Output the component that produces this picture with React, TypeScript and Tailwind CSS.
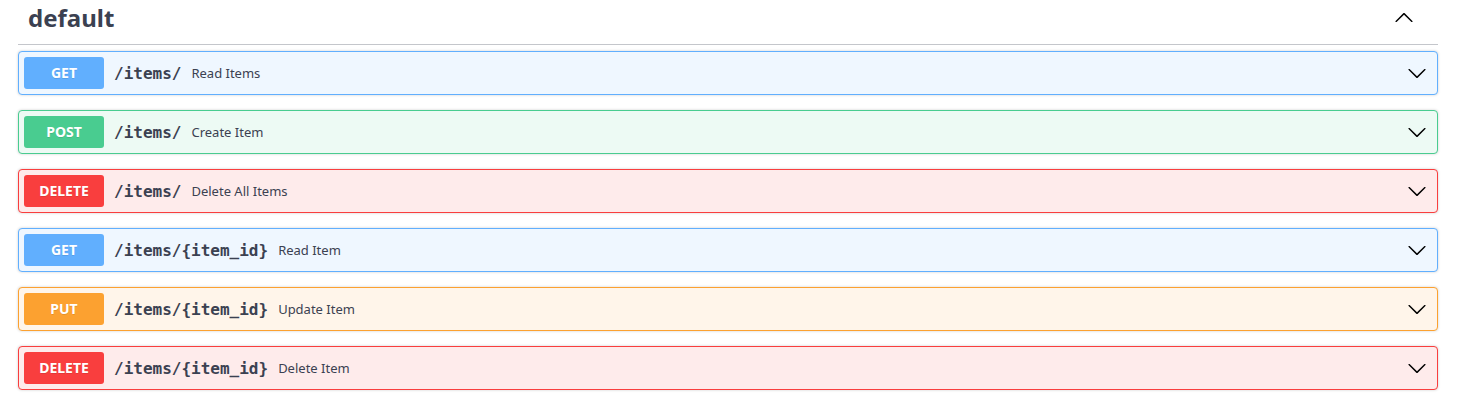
import React from "react";

const Chevron = ({ up = false }: { up?: boolean }) => (
  <svg width="20" height="20" viewBox="0 0 20 20" className={up ? "rotate-180" : ""} aria-hidden="true">
    <path
      fill="#000"
      d="M17.418 6.109c.272-.268.709-.268.979 0s.271.701 0 .969l-7.908 7.83c-.27.268-.707.268-.979 0l-7.908-7.83c-.27-.268-.27-.701 0-.969.271-.268.709-.268.979 0L10 13.25l7.418-7.141z"
    />
  </svg>
);

type Op = { method: string; path: string; desc: string };

const styles: Record<string, { block: string; badge: string }> = {
  GET: { block: "border-[#61affe] bg-[#eff7ff]", badge: "bg-[#61affe]" },
  POST: { block: "border-[#49cc90] bg-[#edfaf4]", badge: "bg-[#49cc90]" },
  DELETE: { block: "border-[#f93e3e] bg-[#feebeb]", badge: "bg-[#f93e3e]" },
  PUT: { block: "border-[#fca130] bg-[#fff5ea]", badge: "bg-[#fca130]" },
};

const ops: Op[] = [
  { method: "GET", path: "/items/", desc: "Read Items" },
  { method: "POST", path: "/items/", desc: "Create Item" },
  { method: "DELETE", path: "/items/", desc: "Delete All Items" },
  { method: "GET", path: "/items/{item_id}", desc: "Read Item" },
  { method: "PUT", path: "/items/{item_id}", desc: "Update Item" },
  { method: "DELETE", path: "/items/{item_id}", desc: "Delete Item" },
];

export default function App() {
  return (
    <div className="min-h-[406px] bg-white pl-[18px] pr-[25px] font-['Noto_Sans',sans-serif] text-[#3b4151]">
      <div className="flex h-[45px] items-center border-b border-[#c4c6cb] pl-[10px] pr-[24px]">
        <h3 className="flex-1 text-[24px] font-bold leading-none text-[#3b4151] -mt-[8px]">default</h3>
        <div className="-mt-[8px]">
          <Chevron up />
        </div>
      </div>
      <div className="mt-[6px] flex flex-col gap-[15px]">
        {ops.map((op, i) => {
          const s = styles[op.method];
          return (
            <div
              key={i}
              className={`flex h-[44px] items-center rounded-[4px] border p-[5px] shadow-[0_0_3px_rgba(0,0,0,0.19)] ${s.block}`}
            >
              <span
                className={`flex h-[32px] w-[80px] items-center justify-center rounded-[3px] pb-[2px] text-[14px] font-bold text-white [text-shadow:0_1px_0_rgba(0,0,0,0.1)] ${s.badge}`}
              >
                {op.method}
              </span>
              <span className="px-[10px] pt-[2px] font-['DejaVu_Sans_Mono',monospace] text-[16px] font-bold text-[#3b4151]">
                {op.path}
              </span>
              <span className="flex-1 pt-[2px] text-[13px] text-[#3b4151]">{op.desc}</span>
              <div className="mr-[5px]">
                <Chevron />
              </div>
            </div>
          );
        })}
      </div>
    </div>
  );
}
